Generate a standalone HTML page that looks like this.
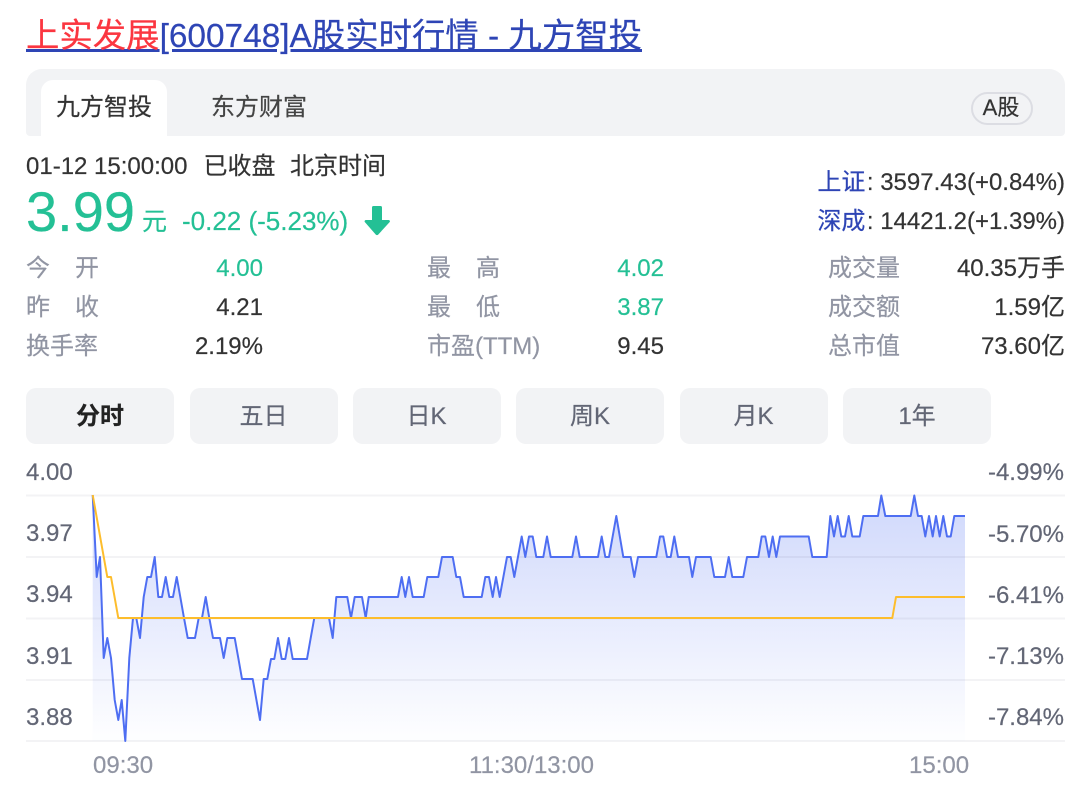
<!DOCTYPE html>
<html lang="zh"><head><meta charset="utf-8"><title>上实发展</title>
<style>
html,body{margin:0;padding:0;background:#fff}
body{width:1080px;height:789px;position:relative;overflow:hidden;font-family:"Liberation Sans","Noto Sans CJK SC",sans-serif;font-size:24px;color:#333;-webkit-text-stroke:.2px}
.t{position:absolute;white-space:nowrap;line-height:32px}
.r{text-align:right}
.l{color:#9195a3}
.g{color:#24c095}
.a{color:#626675}
.x{color:#9195a3;text-align:center}
.b{position:absolute;top:388px;height:56px;background:#f2f3f5;border-radius:10px;line-height:58px;text-align:center;color:#626675;width:148px}
.n{color:#2e45b5;position:relative;left:-1.500px}
</style></head><body>
<div class="t" style="left:26px;top:16px;font-size:33.400px;line-height:42px;text-decoration:underline;color:#2e45b5"><span style="color:#fb3640">上实发展</span>[600748]A股实时行情 - 九方智投</div>
<div style="position:absolute;left:26px;top:69px;width:1039px;height:67px;background:#f2f3f5;border-radius:16px 16px 4px 4px"></div>
<div style="position:absolute;left:41px;top:80px;width:126px;height:56px;background:#fff;border-radius:12px 12px 0 0"></div>
<div class="t" style="left:56px;top:92px">九方智投</div>
<div class="t" style="left:211px;top:92px;color:#444">东方财富</div>
<div style="position:absolute;left:971px;top:92px;width:58px;height:29px;border:2px solid #dcdde3;border-radius:17px"></div>
<div class="t" style="left:970px;width:62px;text-align:center;top:92px;font-size:22px">A股</div>

<div class="t" style="left:26px;top:151px">01-12 15:00:00</div>
<div class="t" style="left:203.500px;top:151px">已收盘</div>
<div class="t" style="left:290px;top:151px">北京时间</div>
<div class="t g" style="left:26px;top:180px;font-size:56px;line-height:64px">3.99</div>
<div class="t g" style="left:142px;top:206px;font-size:25px">元</div>
<div class="t g" style="left:182px;top:205px;font-size:26px">-0.22 (-5.23%)</div>
<svg style="position:absolute;left:360px;top:202px" width="34" height="38" viewBox="0 0 34 38"><path d="M12 5.500a1.500 1.500 0 0 1 1.500-1.500h7a1.500 1.500 0 0 1 1.500 1.500V18h6.500c1.300 0 1.900 1.400 1 2.300L18.200 32.600a1.600 1.600 0 0 1-2.400 0L5 20.300c-.9-.9-.3-2.300 1-2.300H12z" fill="#24c095"/></svg>

<div class="t r" style="right:15px;top:167px"><span class="n">上证</span>: 3597.43(+0.84%)</div>
<div class="t r" style="right:15px;top:206px"><span class="n">深成</span>: 14421.2(+1.39%)</div>

<div class="t l" style="left:26px;top:253px">今</div><div class="t l" style="left:75px;top:253px">开</div>
<div class="t l" style="left:26px;top:292px">昨</div><div class="t l" style="left:75px;top:292px">收</div>
<div class="t l" style="left:26px;top:331px">换手率</div>
<div class="t r g" style="right:817px;top:253px">4.00</div>
<div class="t r" style="right:817px;top:292px">4.21</div>
<div class="t r" style="right:817px;top:331px">2.19%</div>

<div class="t l" style="left:427px;top:253px">最</div><div class="t l" style="left:476px;top:253px">高</div>
<div class="t l" style="left:427px;top:292px">最</div><div class="t l" style="left:476px;top:292px">低</div>
<div class="t l" style="left:427px;top:331px">市盈(TTM)</div>
<div class="t r g" style="right:416px;top:253px">4.02</div>
<div class="t r g" style="right:416px;top:292px">3.87</div>
<div class="t r" style="right:416px;top:331px">9.45</div>

<div class="t l" style="left:828px;top:253px">成交量</div>
<div class="t l" style="left:828px;top:292px">成交额</div>
<div class="t l" style="left:828px;top:331px">总市值</div>
<div class="t r" style="right:15px;top:253px">40.35万手</div>
<div class="t r" style="right:15px;top:292px">1.59亿</div>
<div class="t r" style="right:15px;top:331px">73.60亿</div>

<div class="b" style="left:26px;color:#222;font-weight:bold">分时</div>
<div class="b" style="left:189.500px">五日</div>
<div class="b" style="left:352.500px">日K</div>
<div class="b" style="left:516px">周K</div>
<div class="b" style="left:679.500px">月K</div>
<div class="b" style="left:843px">1年</div>

<svg style="position:absolute;left:0;top:0" width="1080" height="789" viewBox="0 0 1080 789">
<defs><linearGradient id="f" x1="0" y1="495" x2="0" y2="735" gradientUnits="userSpaceOnUse"><stop offset="0" stop-color="#4e6ef2" stop-opacity=".27"/><stop offset="1" stop-color="#4e6ef2" stop-opacity=".01"/></linearGradient></defs>
<polygon fill="url(#f)" points="92.700,495 96.700,577 100,557 103.700,658 107.300,638 111,658 114.700,700 118.300,720 121.700,700 125.300,741 129.300,658 133,618 136.300,618 140,638 143.700,597 147.300,577 151,577 154.700,557 158.300,597 162,597 165.700,577 169.300,597 173,597 176.700,577 180.300,597 184,618 187.700,638 195,638 198.700,618 202,618 205.700,597 209.300,618 213,638 220,638 223.700,658 227.300,638 234.700,638 238.300,658 242,679 252.700,679 260,720 263.700,679 267.300,679 271,659 274.300,659 278,638 281.700,659 285.300,659 289,638 292.700,659 307,659 310.700,638 314.300,618 329,618 332.700,638 336.300,597 347.300,597 351,618 354.700,597 362,597 365.700,618 368.700,597 398,597 401.700,577 405.300,597 409,577 412.700,597 423.700,597 427.300,577 438.300,577 442,557 452.700,557 456.300,577 460,577 463.700,597 481.700,597 485.300,577 489,577 492.700,597 496,577 499.700,597 507,557 510.700,557 514.300,577 521.700,536.500 525.300,557 529,536.500 532.700,536.500 536.300,557 543.300,557 547,536.500 550.700,557 572.300,557 576,536.500 579.700,557 598,557 601.700,536.500 605.300,557 609,557 616.300,516 623.300,557 630.700,557 634.300,577 638,557 656.300,557 660,536.500 663.300,536.500 667,557 670.700,557 674.300,536.500 678,557 689,557 692.300,577 696,557 710.700,557 714.300,577 725,577 728.700,557 732.300,577 743.300,577 747,557 758.300,557 761.700,536.500 765.300,536.500 769,557 772.700,536.500 776.300,557 780,536.500 808.700,536.500 812.300,557 826.700,557 830.300,516 834,536.500 837.700,516 841.300,536.500 845,536.500 848.700,516 852.300,536.500 859.700,536.500 863.300,516 878,516 881.300,495.500 885.300,516 910.700,516 914.300,495.500 918,516 921.700,516 925.300,536.500 929,516 932.700,536.500 936,516 939.700,536.500 943.300,516 947,536.500 950.700,536.500 954.300,516 965,516 965,741 92.700,741"/>
<g stroke="#1c2240" stroke-opacity=".055" stroke-width="2" fill="none">
<path d="M26 495.500H1065M26 557H1065M26 618.500H1065M26 680H1065M26 741H1065"/>
</g>
<polyline fill="none" stroke="#4e6ef2" stroke-width="2" stroke-linejoin="round" points="92.700,495 96.700,577 100,557 103.700,658 107.300,638 111,658 114.700,700 118.300,720 121.700,700 125.300,741 129.300,658 133,618 136.300,618 140,638 143.700,597 147.300,577 151,577 154.700,557 158.300,597 162,597 165.700,577 169.300,597 173,597 176.700,577 180.300,597 184,618 187.700,638 195,638 198.700,618 202,618 205.700,597 209.300,618 213,638 220,638 223.700,658 227.300,638 234.700,638 238.300,658 242,679 252.700,679 260,720 263.700,679 267.300,679 271,659 274.300,659 278,638 281.700,659 285.300,659 289,638 292.700,659 307,659 310.700,638 314.300,618 329,618 332.700,638 336.300,597 347.300,597 351,618 354.700,597 362,597 365.700,618 368.700,597 398,597 401.700,577 405.300,597 409,577 412.700,597 423.700,597 427.300,577 438.300,577 442,557 452.700,557 456.300,577 460,577 463.700,597 481.700,597 485.300,577 489,577 492.700,597 496,577 499.700,597 507,557 510.700,557 514.300,577 521.700,536.500 525.300,557 529,536.500 532.700,536.500 536.300,557 543.300,557 547,536.500 550.700,557 572.300,557 576,536.500 579.700,557 598,557 601.700,536.500 605.300,557 609,557 616.300,516 623.300,557 630.700,557 634.300,577 638,557 656.300,557 660,536.500 663.300,536.500 667,557 670.700,557 674.300,536.500 678,557 689,557 692.300,577 696,557 710.700,557 714.300,577 725,577 728.700,557 732.300,577 743.300,577 747,557 758.300,557 761.700,536.500 765.300,536.500 769,557 772.700,536.500 776.300,557 780,536.500 808.700,536.500 812.300,557 826.700,557 830.300,516 834,536.500 837.700,516 841.300,536.500 845,536.500 848.700,516 852.300,536.500 859.700,536.500 863.300,516 878,516 881.300,495.500 885.300,516 910.700,516 914.300,495.500 918,516 921.700,516 925.300,536.500 929,516 932.700,536.500 936,516 939.700,536.500 943.300,516 947,536.500 950.700,536.500 954.300,516 965,516"/>
<polyline fill="none" stroke="#fdbd2c" stroke-width="2" stroke-linejoin="round" points="92.700,495 107.300,577 111,577 118.300,618 892.300,618 896,597 965,597"/>
</svg>

<div class="t a" style="left:26px;top:457px">4.00</div>
<div class="t a" style="left:26px;top:518px">3.97</div>
<div class="t a" style="left:26px;top:579px">3.94</div>
<div class="t a" style="left:26px;top:641px">3.91</div>
<div class="t a" style="left:26px;top:702px">3.88</div>
<div class="t a r" style="right:16px;top:457px">-4.99%</div>
<div class="t a r" style="right:16px;top:519px">-5.70%</div>
<div class="t a r" style="right:16px;top:580px">-6.41%</div>
<div class="t a r" style="right:16px;top:641px">-7.13%</div>
<div class="t a r" style="right:16px;top:702px">-7.84%</div>
<div class="t x" style="left:93px;top:750px">09:30</div>
<div class="t x" style="left:469px;top:750px">11:30/13:00</div>
<div class="t x" style="left:909px;top:750px">15:00</div>
</body></html>
